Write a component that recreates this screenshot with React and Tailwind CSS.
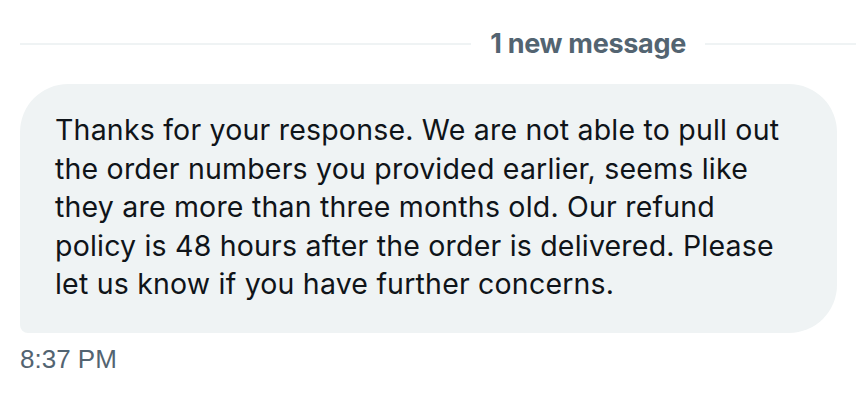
const lines = [
  "Thanks for your response. We are not able to pull out",
  "the order numbers you provided earlier, seems like",
  "they are more than three months old. Our refund",
  "policy is 48 hours after the order is delivered. Please",
  "let us know if you have further concerns.",
];

export default function App() {
  return (
    <div className="w-[856px] h-[402px] bg-white overflow-hidden">
      <div className="flex items-center pl-[20px] pt-[30px] h-[58px]">
        <div className="flex-1 h-[2px] bg-[#eff3f4]" />
        <div className="px-[19px] text-[27px] leading-[28px] font-bold text-[#536471] font-['Inter',sans-serif] tracking-[-0.3px]">
          1 new message
        </div>
        <div className="w-[151px] h-[2px] bg-[#eff3f4]" />
      </div>
      <div className="pl-[20px] pt-[26px] w-[837px]">
        <div className="bg-[#eff3f4] rounded-[48px] rounded-bl-[8px] pl-[35px] pr-[20px] pt-[27px] pb-[29px] text-[28.5px] leading-[38.5px] tracking-[0.2px] text-[#0f1419] font-['Inter',sans-serif]">
          {lines.map((l) => (
            <div key={l} className="whitespace-nowrap">{l}</div>
          ))}
        </div>
      </div>
      <div className="pl-[20px] pt-[10px] text-[26px] leading-[32px] text-[#536471] font-['Liberation_Sans',sans-serif]">
        8:37 PM
      </div>
    </div>
  );
}
